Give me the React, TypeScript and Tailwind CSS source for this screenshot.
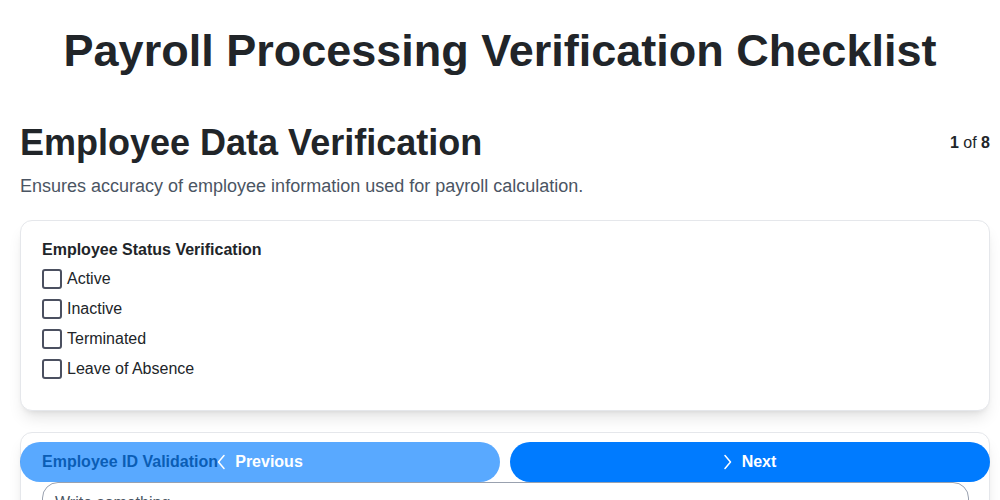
import React from 'react';

const STATUSES = ['Active', 'Inactive', 'Terminated', 'Leave of Absence'];

const Chevron = ({ dir }: { dir: 'left' | 'right' }) => (
    <svg width="8" height="16" viewBox="0 0 8 16" fill="none" stroke="currentColor" strokeWidth="1.5" strokeLinecap="round" strokeLinejoin="round">
        {dir === 'left' ? <path d="M7 1.5 L1.5 8 L7 14.5" /> : <path d="M1 1.5 L6.5 8 L1 14.5" />}
    </svg>
);

export default function App() {
    return (
        <div className="min-h-screen bg-white text-[#212529] pb-24" style={{ fontFamily: '"Liberation Sans", Arial, sans-serif' }}>
            <h1 className="text-center text-[45px] font-bold leading-none pt-[28px] pb-[48px]">Payroll Processing Verification Checklist</h1>

            <div className="pl-5 pr-2.5">
                <div className="flex items-center justify-between">
                    <h2 className="text-[36px] font-bold leading-[44px]">Employee Data Verification</h2>
                    <div className="text-base"><span className="font-bold">1</span> of <span className="font-bold">8</span></div>
                </div>
                <p className="text-[18px] leading-[27px] text-[#4b5563] mt-[8px] mb-[20px]">Ensures accuracy of employee information used for payroll calculation.</p>

                <div className="rounded-xl border border-gray-200 bg-white shadow-lg pl-[21px] pr-5 pt-[17px] pb-[31px]">
                    <div className="font-bold text-base leading-6 mb-[7px]">Employee Status Verification</div>
                    <div className="flex flex-col gap-2.5">
                        {STATUSES.map(s => (
                            <label key={s} className="flex items-center gap-[5px] text-base leading-5">
                                <span className="w-5 h-5 rounded-[3px] border-2 border-[#4b5060] bg-white" />
                                <span>{s}</span>
                            </label>
                        ))}
                    </div>
                </div>

                <div className="mt-[21px] rounded-xl border border-gray-200 bg-white shadow-lg pl-[21px] pr-5 pt-[17px] pb-6">
                    <div className="font-bold text-base leading-6 mb-2">Employee ID Validation</div>
                    <div className="rounded-2xl border border-gray-400 px-3 py-2 h-24 text-base text-[#4b5563]">Write something...</div>
                </div>
            </div>

            <div className="fixed bottom-[18px] left-5 right-2.5 flex gap-2.5">
                <button className="flex-1 h-10 rounded-full bg-[#007bff] opacity-65 text-white font-bold text-base flex items-center justify-center gap-2.5">
                    <Chevron dir="left" />
                    Previous
                </button>
                <button className="flex-1 h-10 rounded-full bg-[#007bff] text-white font-bold text-base flex items-center justify-center gap-2.5">
                    <Chevron dir="right" />
                    Next
                </button>
            </div>
        </div>
    );
}
